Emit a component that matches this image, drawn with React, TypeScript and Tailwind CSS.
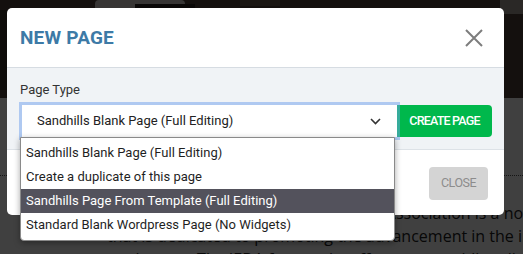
const options = [
  "Sandhills Blank Page (Full Editing)",
  "Create a duplicate of this page",
  "Sandhills Page From Template (Full Editing)",
  "Standard Blank Wordpress Page (No Widgets)",
];

function BackgroundPage() {
  return (
    <div className="w-full h-full bg-white">
      <div className="relative h-[98px] bg-[#4f423a] overflow-hidden">
        <div className="absolute left-[95px] top-0 w-[90px] h-[12px] bg-[#d9d4cf] rounded-sm" />
        <div className="absolute left-[135px] top-[4px] w-[60px] h-[6px] bg-[#2a211c]" />
        <div className="absolute left-[240px] top-0 w-[40px] h-[6px] bg-[#6b5d52]" />
        <div className="absolute left-[500px] top-0 w-[30px] h-[14px] bg-[#a8a096]" />
        <div className="absolute left-0 top-[10px] w-[8px] h-[80px] bg-[#3b302a]" />
      </div>
      <div className="h-[77px]" />
      <div className="border-t border-dotted border-[#555] pl-[107px] pt-[26px] font-['Open_Sans',sans-serif] text-[16px] leading-[23px] text-[#222] whitespace-nowrap">
        <p>The International Equipment Dealers Association is a non-profit</p>
        <p>that is dedicated to promoting the advancement in the industry of</p>
        <p>equipment. The IEDA focuses its efforts on providing direct</p>
      </div>
    </div>
  );
}

export default function App() {
  return (
    <div className="relative w-[523px] h-[254px] overflow-hidden font-['Roboto',sans-serif]">
      <BackgroundPage />
      <div className="absolute inset-0 bg-black/75" />

      <div className="absolute left-[7px] top-[8px] w-[497px] h-[207px] bg-white rounded-[5px] flex flex-col">
        <div className="h-[60px] shrink-0 flex items-center justify-between pl-[13px] pr-[21px] border-b border-[#d6dce2]">
          <h2 className="text-[19px] font-bold tracking-[0.2px] text-[#3d7aa6] uppercase pt-[1px]">
            New Page
          </h2>
          <svg width="18" height="18" viewBox="0 0 18 18" className="mt-[1px]">
            <path d="M1 1L17 17M17 1L1 17" stroke="#7d7d7d" strokeWidth="2" />
          </svg>
        </div>

        <div className="h-[82px] shrink-0 bg-[#f0f3f6] border-b border-[#dde2e7] pl-[13px] pr-[12px] pt-[14px]">
          <label className="block text-[13px] leading-[16px] text-[#333]">Page Type</label>
          <div className="flex mt-[7px]">
            <div className="relative z-10 ml-[2px] w-[375px] h-[32px] bg-white shadow-[0_0_0_3px_rgba(110,160,235,0.5)] flex items-center justify-between pl-[15px] pr-[16px]">
              <span className="text-[13px] text-[#222]">{options[0]}</span>
              <svg width="11" height="7" viewBox="0 0 11 7">
                <path d="M1 1L5.5 5.5L10 1" fill="none" stroke="#333" strokeWidth="1.6" />
              </svg>
              <ul className="absolute left-[-2px] top-[32px] w-[375px] bg-white border border-[#8a8a8a] rounded-b-[4px] shadow-[0_2px_6px_rgba(0,0,0,0.35)] pt-[3px] pb-[3px]">
                {options.map((o, i) => (
                  <li
                    key={o}
                    className={
                      i === 2
                        ? "h-[24px] flex items-center pl-[5px] text-[13px] bg-[#53525c] text-white"
                        : "h-[24px] flex items-center pl-[5px] text-[13px] text-[#1f1f1f]"
                    }
                  >
                    {o}
                  </li>
                ))}
              </ul>
            </div>
            <button className="w-[95px] h-[32px] bg-[#00b84c] text-white text-[12.5px] font-medium tracking-[-0.8px] rounded-r-[4px] uppercase">
              Create Page
            </button>
          </div>
        </div>

        <div className="flex-1 flex justify-end items-start pt-[17px] pr-[16px]">
          <button className="w-[59px] h-[33px] bg-[#d4d4d4] text-[#8c8c8c] text-[12.5px] tracking-[-0.5px] rounded-[4px] uppercase">
            Close
          </button>
        </div>
      </div>
    </div>
  );
}
